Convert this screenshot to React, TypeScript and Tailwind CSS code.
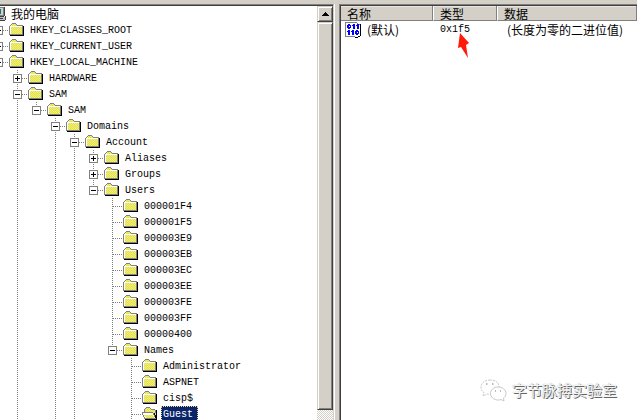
import React from 'react';

type Kind = 'plus' | 'minus' | 'leaf';

interface Node {
  name: string;
  // One entry for each ancestor column: whether its guide line runs through this row.
  guides: boolean[];
  kind: Kind;
  last?: boolean;
  selected?: boolean;
}

const toUsers = [false, true, false, true, true];
const inUsers = [...toUsers, false];
const inNames = [...inUsers, false];

const nodes: Node[] = [
  { name: 'HKEY_CLASSES_ROOT', guides: [], kind: 'plus' },
  { name: 'HKEY_CURRENT_USER', guides: [], kind: 'plus' },
  { name: 'HKEY_LOCAL_MACHINE', guides: [], kind: 'minus' },
  { name: 'HARDWARE', guides: [true], kind: 'plus' },
  { name: 'SAM', guides: [true], kind: 'minus' },
  { name: 'SAM', guides: [true, true], kind: 'minus', last: true },
  { name: 'Domains', guides: [true, true, false], kind: 'minus' },
  { name: 'Account', guides: [false, true, false, true], kind: 'minus' },
  { name: 'Aliases', guides: toUsers, kind: 'plus' },
  { name: 'Groups', guides: toUsers, kind: 'plus' },
  { name: 'Users', guides: toUsers, kind: 'minus', last: true },
  { name: '000001F4', guides: inUsers, kind: 'leaf' },
  { name: '000001F5', guides: inUsers, kind: 'leaf' },
  { name: '000003E9', guides: inUsers, kind: 'leaf' },
  { name: '000003EB', guides: inUsers, kind: 'leaf' },
  { name: '000003EC', guides: inUsers, kind: 'leaf' },
  { name: '000003EE', guides: inUsers, kind: 'leaf' },
  { name: '000003FE', guides: inUsers, kind: 'leaf' },
  { name: '000003FF', guides: inUsers, kind: 'leaf' },
  { name: '00000400', guides: inUsers, kind: 'leaf' },
  { name: 'Names', guides: inUsers, kind: 'minus', last: true },
  { name: 'Administrator', guides: inNames, kind: 'leaf' },
  { name: 'ASPNET', guides: inNames, kind: 'leaf' },
  { name: 'cisp$', guides: inNames, kind: 'leaf' },
  { name: 'Guest', guides: inNames, kind: 'leaf', selected: true },
];

const DOTS_DOWN = 'bg-[repeating-linear-gradient(to_bottom,#808080_0_1px,transparent_1px_2px)]';
const DOTS_ACROSS = 'bg-[repeating-linear-gradient(to_right,#808080_0_1px,transparent_1px_2px)]';

function Folder() {
  return (
    <svg width="16" height="16" viewBox="0 0 16 16" shapeRendering="crispEdges" className="shrink-0" aria-hidden="true">
      <path d="M2 2h1V1h5v1h1v1h5v10H1V3h1z" fill="#fff" />
      <path d="M3 2h5v2h5v8H2V4h1z" fill="url(#dither)" />
      <path d="M3 1h4v1H3zM2 2h1v1H2zM7 2h1v1H7zM8 3h6v1H8zM1 3h1v1H1zM0 4h1v9H0zM13 4h1v9h-1zM1 12h13v1H1z" fill="#808080" />
      <path d="M1 4h12v1H1zM1 5h1v7H1z" fill="#fff" />
      <path d="M14 4h1v10H1v-1h13z" fill="#000" />
    </svg>
  );
}

function OpenFolder() {
  return (
    <svg width="16" height="16" viewBox="0 0 16 16" shapeRendering="crispEdges" className="shrink-0" aria-hidden="true">
      <path d="M3 2h5v1h5v3h1v7H3V6H2V4h1z" fill="url(#dither)" />
      <path d="M4 1h4v1H4zM3 2h1v1H3zM8 2h1v1H8zM9 3h4v1H9zM2 3h1v3H2zM13 4h1v3h-1z" fill="#808080" />
      <path d="M1 7h10v1h1v2h1v2h1v1H4v-1H3v-2H2V8H1z" fill="#fff" />
      <path d="M2 9h9v1h1v2H4v-1H3v-1H2z" fill="url(#dither)" />
      <path d="M0 6h11v1H0zM0 7h1v2H0zM1 9h1v2H1zM2 11h1v2H2zM11 7h1v2h-1zM12 9h1v2h-1zM3 12h11v1H3z" fill="#808080" />
      <path d="M14 4h1v10H3v-1h11zM12 7h1v2h-1zM13 9h1v3h-1z" fill="#000" />
    </svg>
  );
}

function Computer() {
  return (
    <svg width="16" height="16" viewBox="0 0 16 16" shapeRendering="crispEdges" className="shrink-0" aria-hidden="true">
      <path d="M4 1h10v9H4z" fill="#808080" />
      <path d="M5 2h8v7H5z" fill="#d4d0c8" />
      <path d="M6 3h5v5H6z" fill="#008080" />
      <path d="M13 2h1v8h-1z" fill="#808080" />
      <path d="M14 1h1v9h-1zM7 10h7v1H7z" fill="#404040" />
      <path d="M3 11h12v3H3z" fill="#c0c0c0" />
      <path d="M15 10h1v4h-1zM3 14h12v1H3zM10 12h3v1h-3z" fill="#404040" />
    </svg>
  );
}

function BinaryValue() {
  return (
    <svg width="16" height="16" viewBox="0 0 16 16" shapeRendering="crispEdges" className="shrink-0" aria-hidden="true">
      <path d="M1 1h11v1h1v1h2v11h-3v1h-2v-1H1z" fill="#fff" />
      <path d="M0 0h12v1H0zM0 1h1v14H0zM12 1h1v1h-1zM13 2h2v1h-2zM1 14h9v1H1z" fill="#808080" />
      <path d="M15 2h1v12h-1zM13 14h2v1h-2zM10 15h3v1h-3z" fill="#000" />
      <path
        d="M3 2h2v1h1v3H5v1H3V6H2V3h1zM8 2h2v5H8zM12 2h2v5h-2zM7 3h1v1H7zM11 3h1v1h-1zM3 8h2v5H3zM2 9h1v1H2zM7 8h2v5H7zM6 9h1v1H6zM11 8h2v1h1v3h-1v1h-2v-1h-1V9h1z"
        fill="#0000ff"
      />
      <path d="M4 4h0.500v1H4zM11.500 10h1v1h-1z" fill="#fff" />
    </svg>
  );
}

function Row({ node }: { node: Node }) {
  return (
    <li className="flex h-4 items-start" role="treeitem" aria-selected={!!node.selected} aria-expanded={node.kind === 'leaf' ? undefined : node.kind === 'minus'}>
      {node.guides.map((on, i) => (
        <span key={i} className="flex h-4 w-[19px] shrink-0 pl-2">
          {on && i > 0 && <span className={`h-4 w-px ${DOTS_DOWN}`} />}
        </span>
      ))}
      <span className="relative flex h-4 w-[19px] shrink-0 pl-2">
        <span className={`w-px ${node.last ? 'h-2' : 'h-4'} ${DOTS_DOWN}`} />
        <span className={`mt-2 h-px w-[10px] ${DOTS_ACROSS}`} />
        {node.kind !== 'leaf' && (
          <button aria-label={`${node.kind === 'plus' ? '展开' : '折叠'} ${node.name}`} className="absolute top-1 left-1 flex size-[9px] items-center justify-center border border-[#808080] bg-white">
            <svg width="5" height="5" shapeRendering="crispEdges" aria-hidden="true">
              <path d={node.kind === 'plus' ? 'M0 2h5v1H0zM2 0h1v5H2z' : 'M0 2h5v1H0z'} fill="#000" />
            </svg>
          </button>
        )}
      </span>
      {node.selected ? <OpenFolder /> : <Folder />}
      <span
        className={`ml-[3px] h-4 border px-px font-['Liberation_Mono',monospace] text-[10px] leading-4 whitespace-nowrap ${
          node.selected ? 'border-dotted border-[#f5db95] bg-[#0a246a] pr-1 text-white' : 'border-transparent'
        }`}
      >
        {node.name}
      </span>
    </li>
  );
}

function ScrollBar() {
  const raised = 'border border-t-[#d4d0c8] border-l-[#d4d0c8] border-r-[#404040] border-b-[#404040] bg-[#d4d0c8] shadow-[inset_1px_1px_#fff,inset_-1px_-1px_#808080]';
  return (
    <div className="flex w-4 shrink-0 flex-col bg-[repeating-conic-gradient(#d4d0c8_0_25%,#fff_0_50%)] bg-[length:2px_2px]">
      <button aria-label="向上滚动" className={`flex h-4 shrink-0 items-center justify-center ${raised}`}>
        <svg width="7" height="4" shapeRendering="crispEdges" aria-hidden="true">
          <path d="M3 0h1v1h1v1h1v1h1v1H0V3h1V2h1V1h1z" fill="#000" />
        </svg>
      </button>
      <div className={`flex-1 ${raised}`} />
      <div className="h-[10px]" />
    </div>
  );
}

const headCell = 'h-[15px] border-r border-b border-[#808080] bg-[#d4d0c8] p-0 pt-0.5 pl-[6px] text-left font-normal leading-[12px] shadow-[inset_0_1px_#e8e6e0]';

export default function App() {
  return (
    <div className="relative flex h-screen w-full flex-col overflow-hidden bg-[#d4d0c8] pt-1 font-['Noto_Sans_CJK_SC',sans-serif] text-[12px] text-black">
      <svg width="0" height="0" className="absolute" aria-hidden="true">
        <pattern id="dither" width="2" height="2" patternUnits="userSpaceOnUse">
          <path d="M0 0h2v2H0z" fill="#ffff00" />
          <path d="M0 0h1v1H0zM1 1h1v1H1z" fill="#d4d0c8" />
        </pattern>
      </svg>

      <div className="flex min-h-0 flex-1">
        <section className="flex w-[334px] shrink-0 overflow-hidden border-t border-r border-t-[#808080] border-r-[#d4d0c8] bg-white">
          <div className="flex min-w-0 flex-1 overflow-hidden border-t border-[#404040]">
            <ul role="tree" className="-ml-[10px] min-w-0 flex-1">
              <li className="flex h-4 items-start" role="treeitem" aria-expanded="true">
                <Computer />
                <span className="ml-[5px] leading-4">我的电脑</span>
              </li>
              {nodes.map((node, i) => (
                <Row key={i} node={node} />
              ))}
            </ul>
            <ScrollBar />
          </div>
        </section>

        <div className="w-[5px] shrink-0 border-l border-white bg-[#d4d0c8]" />

        <section className="min-w-0 flex-1 border-t border-l border-[#808080]">
          <div className="h-full border-t border-l border-[#404040] bg-white">
            <table className="w-full table-fixed border-separate border-spacing-0">
              <thead>
                <tr>
                  <th className={`w-[92px] ${headCell}`}>名称</th>
                  <th className={`w-[64px] border-l border-l-white ${headCell}`}>类型</th>
                  <th className={`border-l border-l-white ${headCell}`}>数据</th>
                </tr>
              </thead>
              <tbody>
                <tr className="leading-4">
                  <td className="p-0 pt-px">
                    <div className="flex items-center gap-1.5 pl-1">
                      <BinaryValue />
                      <span className="whitespace-nowrap">(默认)</span>
                    </div>
                  </td>
                  <td className="p-0 pt-px pl-[7px] font-['Liberation_Mono',monospace] text-[10px]">0x1f5</td>
                  <td className="p-0 pt-px pl-[10px] whitespace-nowrap">(长度为零的二进位值)</td>
                </tr>
              </tbody>
            </table>
          </div>
        </section>
      </div>

      <svg className="absolute top-[33px] left-[457px]" width="13" height="26" viewBox="0 0 13 26" aria-hidden="true">
        <path d="M3 0L12 10L9 12L11 25L4 14L1 15Z" fill="#ff1a0a" />
      </svg>

      <div className="absolute right-5 bottom-[18px] flex items-center gap-[5px] text-[15px] leading-5">
        <svg width="27" height="24" viewBox="0 0 27 24" fill="#fff" stroke="#bbb" strokeWidth="0.8" aria-hidden="true">
          <path d="M10 2C5 2 1 5 1 9c0 3 1 4.500 3 5.500L3 18l4-2c7 1 12-2 12-7s-4-7-9-7z" strokeDasharray="2 1" />
          <path d="M18 9c-4.500 0-7.500 3-7.500 6.500S14 22 18 22c1 0 2 0 3-.5l3 1.500-.5-3c1.500-1 2.500-2.500 2.500-4.500C26 12 22.500 9 18 9z" />
          <path d="M6 6h1.500M12 6h1.500M15 13h1M20 13h1" stroke="#555" />
        </svg>
        <span className="font-['Noto_Sans_CJK_SC',sans-serif] text-[#f4f4f4] [text-shadow:1px_1px_0_#666,0_0_1px_#999]">字节脉搏实验室</span>
      </div>
    </div>
  );
}
